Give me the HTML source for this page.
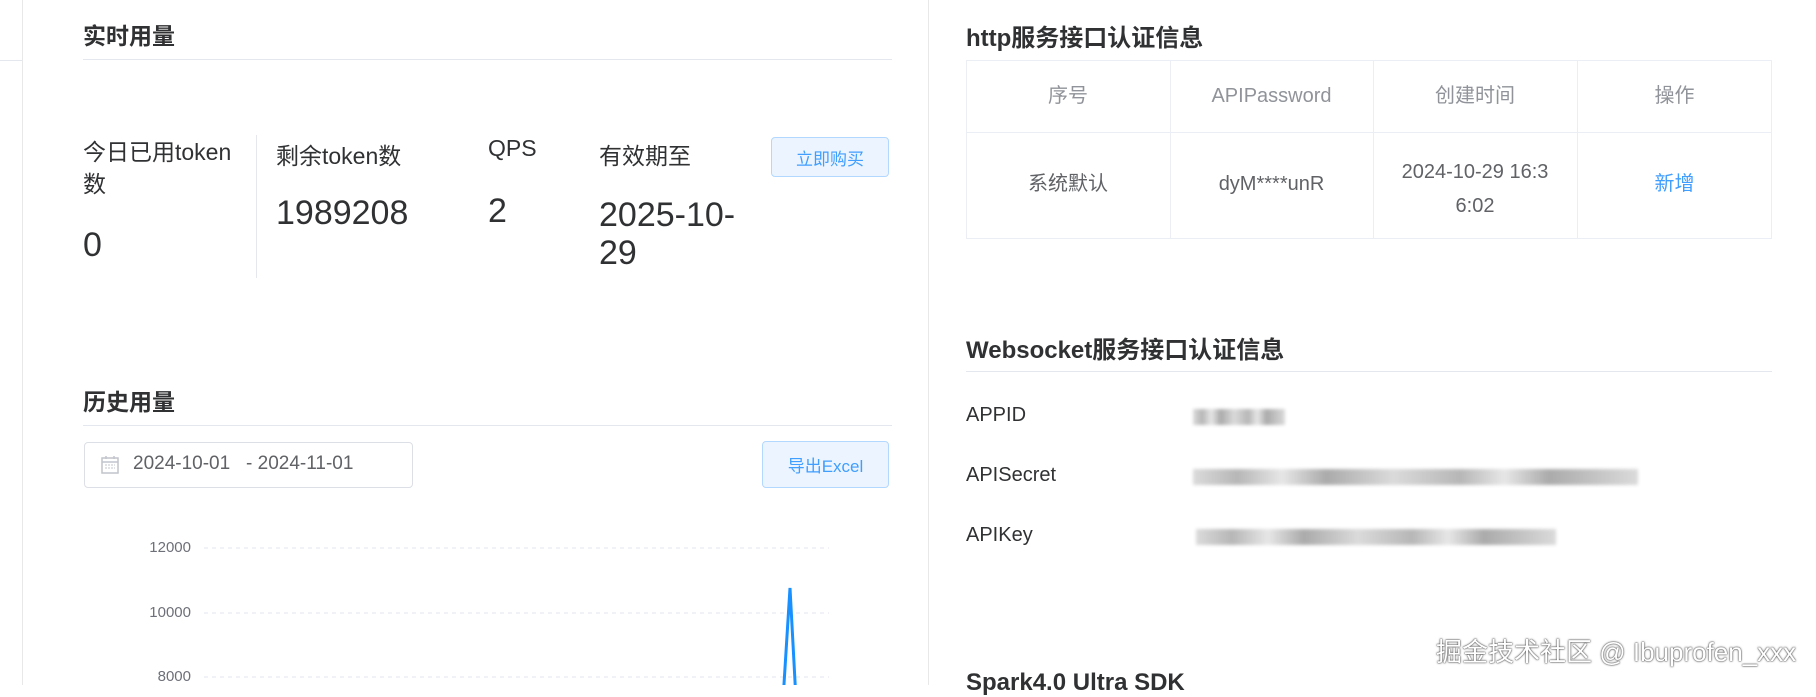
<!DOCTYPE html>
<html><head><meta charset="utf-8"><style>
*{margin:0;padding:0;box-sizing:border-box}
body{width:1816px;height:685px;overflow:hidden;background:#fff;font-family:"Liberation Sans","Noto Sans CJK SC",sans-serif;color:#303133;position:relative}
.a{position:absolute;white-space:nowrap}
.h{font-size:23px;font-weight:bold;color:#303133}
.line{position:absolute;height:1px;background:#e4e7ed}
.lbl{font-size:23px;color:#303133}
.val{font-size:34px;color:#303133}
.btn{position:absolute;background:#ecf5ff;border:1px solid #b3d8ff;border-radius:4px;color:#409eff;font-size:17px;display:flex;align-items:center;justify-content:center}
.th{font-size:20px;color:#909399;text-align:center;line-height:24px}
.td{font-size:20px;color:#606266;text-align:center;line-height:24px}
.k{font-size:20px;color:#303133}
.blur{position:absolute;height:16px;background:linear-gradient(90deg,#ccc,#999 10%,#ddd 20%,#888 30%,#ccc 45%,#999 60%,#ddd 70%,#888 80%,#ccc);filter:blur(1.5px);opacity:.7}
</style></head><body>
<div style="position:absolute;left:22px;top:0;width:1px;height:685px;background:#e8e8e8"></div>
<div class="line" style="left:0;top:60px;width:22px"></div>
<div class="a h" style="left:83px;top:17px">实时用量</div>
<div class="line" style="left:83px;top:59px;width:809px"></div>
<div class="a lbl" style="left:83px;top:136px;line-height:32px">今日已用token<br>数</div>
<div class="a val" style="left:83px;top:226px">0</div>
<div style="position:absolute;left:256px;top:135px;width:1px;height:143px;background:#e4e7ed"></div>
<div class="a lbl" style="left:276px;top:137px">剩余token数</div>
<div class="a val" style="left:276px;top:194px">1989208</div>
<div class="a lbl" style="left:488px;top:135px">QPS</div>
<div class="a val" style="left:488px;top:192px">2</div>
<div class="a lbl" style="left:599px;top:137px">有效期至</div>
<div class="a val" style="left:599px;top:196px;line-height:38px">2025-10-<br>29</div>
<div class="btn" style="left:771px;top:137px;width:118px;height:40px">立即购买</div>
<div class="a h" style="left:83px;top:383px">历史用量</div>
<div class="line" style="left:83px;top:425px;width:809px"></div>
<div style="position:absolute;left:84px;top:442px;width:329px;height:46px;border:1px solid #dcdfe6;border-radius:4px"></div>
<svg class="a" style="left:101px;top:455px" width="18" height="20" viewBox="0 0 18 20"><rect x="1" y="3" width="16" height="15" fill="none" stroke="#c0c4cc" stroke-width="1.5"/><line x1="1" y1="7" x2="17" y2="7" stroke="#c0c4cc" stroke-width="1.5"/><line x1="5" y1="1" x2="5" y2="4" stroke="#c0c4cc" stroke-width="1.5"/><line x1="13" y1="1" x2="13" y2="4" stroke="#c0c4cc" stroke-width="1.5"/><path d="M4 10h10M4 13h10" stroke="#c0c4cc" stroke-dasharray="2 1"/></svg>
<div class="a" style="left:133px;top:453px;font-size:19px;color:#606266">2024-10-01 &nbsp;&nbsp;- 2024-11-01</div>
<div class="btn" style="left:762px;top:441px;width:127px;height:47px">导出Excel</div>
<div class="a" style="left:138px;top:539px;font-size:15px;color:#6e7079;width:53px;text-align:right">12000</div>
<div class="a" style="left:138px;top:604px;font-size:15px;color:#6e7079;width:53px;text-align:right">10000</div>
<div class="a" style="left:138px;top:668px;font-size:15px;color:#6e7079;width:53px;text-align:right">8000</div>
<svg class="a" style="left:0;top:0" width="900" height="685"><g stroke="#e0e6f1" stroke-dasharray="4 4"><line x1="204" y1="548" x2="829" y2="548"/><line x1="204" y1="613" x2="829" y2="613"/><line x1="204" y1="677" x2="829" y2="677"/></g><polyline points="783,700 790,588 796,700" fill="none" stroke="#1890ff" stroke-width="3"/></svg>
<div style="position:absolute;left:928px;top:0;width:1px;height:685px;background:#e8e8e8"></div>
<div class="a h" style="left:966px;top:18px;font-size:24px">http服务接口认证信息</div>
<div style="position:absolute;left:966px;top:60px;width:806px;height:179px;border:1px solid #ebeef5"></div>
<div class="line" style="left:966px;top:132px;width:806px;background:#ebeef5"></div>
<div style="position:absolute;left:1170px;top:60px;width:1px;height:179px;background:#ebeef5"></div>
<div style="position:absolute;left:1373px;top:60px;width:1px;height:179px;background:#ebeef5"></div>
<div style="position:absolute;left:1577px;top:60px;width:1px;height:179px;background:#ebeef5"></div>
<div class="a th" style="left:966px;top:84px;width:204px">序号</div>
<div class="a th" style="left:1170px;top:84px;width:203px">APIPassword</div>
<div class="a th" style="left:1373px;top:84px;width:204px">创建时间</div>
<div class="a th" style="left:1577px;top:84px;width:195px">操作</div>
<div class="a td" style="left:966px;top:172px;width:204px">系统默认</div>
<div class="a td" style="left:1170px;top:172px;width:203px">dyM****unR</div>
<div class="a td" style="left:1373px;top:155px;width:204px;line-height:34px">2024-10-29 16:3<br>6:02</div>
<div class="a td" style="left:1577px;top:172px;width:195px;color:#409eff">新增</div>
<div class="a h" style="left:966px;top:330px;font-size:24px">Websocket服务接口认证信息</div>
<div class="line" style="left:966px;top:371px;width:806px"></div>
<div class="a k" style="left:966px;top:404px">APPID</div>
<div class="a k" style="left:966px;top:464px">APISecret</div>
<div class="a k" style="left:966px;top:524px">APIKey</div>
<div class="blur" style="left:1193px;top:409px;width:92px"></div>
<div class="blur" style="left:1193px;top:469px;width:445px"></div>
<div class="blur" style="left:1196px;top:529px;width:360px"></div>
<div class="a h" style="left:966px;top:669px;font-size:24px">Spark4.0 Ultra SDK</div>
<div class="a" style="left:1436px;top:632px;font-size:26px;color:#fff;text-shadow:0 0 2px #444,0 0 1px #222">掘金技术社区 @ Ibuprofen_xxx</div>
</body></html>
